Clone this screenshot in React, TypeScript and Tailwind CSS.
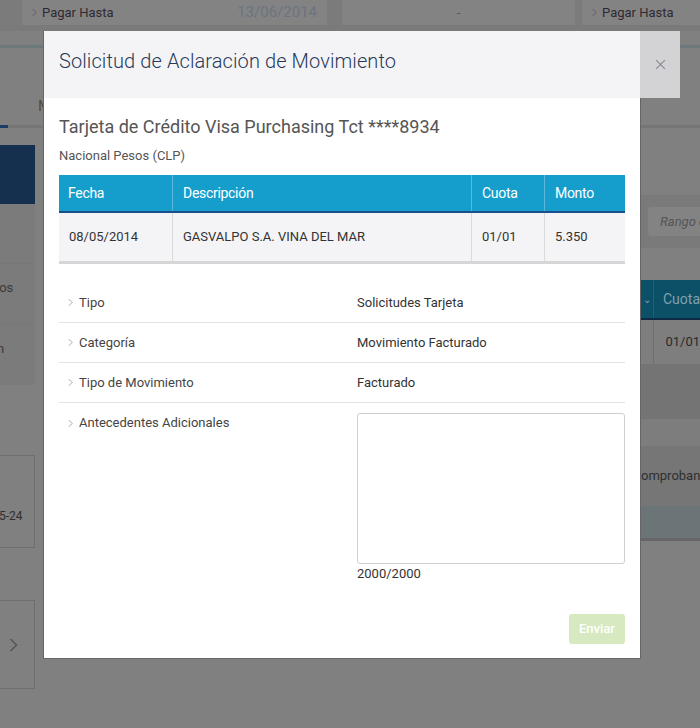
import React from "react";

const rows = [
  { label: "Tipo", value: "Solicitudes Tarjeta" },
  { label: "Categoría", value: "Movimiento Facturado" },
  { label: "Tipo de Movimiento", value: "Facturado" },
];

const Chevron = ({ className = "" }: { className?: string }) => (
  <svg viewBox="0 0 6 10" className={className} fill="none" stroke="currentColor" strokeWidth="1">
    <path d="M1 1l4 4-4 4" />
  </svg>
);

const BackgroundPage = () => (
  <div className="w-[700px] h-[728px] bg-[#808080] text-[13px]">
    {/* top summary cards */}
    <div className="flex h-[25px] bg-[#7b7b7b]">
      <div className="ml-[22px] w-[305px] bg-[#838383] flex items-center pl-[10px] pr-[10px]">
        <Chevron className="w-[5px] h-[9px] text-[#555] mr-[5px]" />
        <span className="text-[#2e2a33] text-[13px]">Pagar Hasta</span>
        <span className="ml-auto text-[#6b7480] text-[15px]">13/06/2014</span>
      </div>
      <div className="ml-[15px] w-[233px] bg-[#838383] flex items-center justify-center text-[#3d5c7c]">-</div>
      <div className="ml-[7px] flex-1 bg-[#838383] flex items-center pl-[10px]">
        <Chevron className="w-[5px] h-[9px] text-[#555] mr-[5px]" />
        <span className="text-[#2e2a33]">Pagar Hasta</span>
      </div>
    </div>
    <div className="h-[6px] bg-[#7a7a7a]" />
    <div className="h-[14px]" />
    <div className="h-[3px] bg-[#6d787d]" />
    {/* tabs */}
    <div className="h-[77px] flex items-end pl-[38px] pb-[8px] text-[#5a4a3c] text-[15px]">M</div>
    <div className="h-[3px] bg-[#767676] flex">
      <div className="w-[8px] bg-[#1c3c66]" />
    </div>
    <div className="flex">
      {/* left sidebar */}
      <div className="w-[35px] pt-[17px] shrink-0 overflow-hidden">
        <div className="h-[59px] bg-[#15304f]" />
        <div className="h-[60px] bg-[#7b7b7b] border-b border-[#777]" />
        <div className="h-[60px] bg-[#7b7b7b] border-b border-[#777] flex items-center pb-[11px] text-[#3a3a3a] text-[13px]">
          <span className="-ml-[5px]">tos</span>
        </div>
        <div className="h-[61px] bg-[#7b7b7b] flex items-center pb-[11px] text-[#3a3a3a] text-[13px]">
          <span className="-ml-[3px]">n</span>
        </div>
        <div className="mt-[70px] h-[93px] border border-l-0 border-[#6e6e6e] flex items-end pb-[22px] text-[#2f2f2f] text-[12px]">
          <span className="-ml-[1px]">5-24</span>
        </div>
        <div className="mt-[52px] h-[89px] border border-l-0 border-[#6e6e6e] flex items-center text-[#555]">
          <Chevron className="w-[9px] h-[20px] ml-[9px]" />
        </div>
      </div>
      <div className="flex-1" />
      {/* right content peeking out */}
      <div className="w-[59px] shrink-0">
        <div className="h-[67px]" />
        <div className="h-[53px] bg-[#7a7a7a] flex items-center pl-[7px]">
          <div className="h-[29px] w-full rounded-l-[3px] bg-[#838383] flex items-center pl-[12px] italic text-[#555] whitespace-nowrap overflow-hidden">Rango d</div>
        </div>
        <div className="h-[32px]" />
        <div className="h-[40px] bg-[#0c5068] border-b-2 border-[#0f2a44] flex items-center text-[#7fa0ae] whitespace-nowrap overflow-hidden">
          <div className="w-[18px] h-full border-r border-[#245f74] flex items-center justify-center text-[10px]">⌄</div>
          <span className="pl-[9px] text-[14px]">Cuota</span>
        </div>
        <div className="h-[44px] bg-[#7e7e7e] flex items-center">
          <div className="w-[18px] h-full border-r border-[#6e6e6e]" />
          <span className="pl-[11px] text-[#2a2a2a] whitespace-nowrap">01/01</span>
        </div>
        <div className="h-[55px] bg-[#747474]" />
        <div className="h-[27px] bg-[#7d7d7d]" />
        <div className="h-[60px] bg-[#767676] flex items-center text-[#2f2f2f] whitespace-nowrap overflow-hidden">omprobant</div>
        <div className="h-[35px] bg-[#6b7577] border-b-[3px] border-[#666]" />
      </div>
    </div>
  </div>
);

export default function App() {
  return (
    <div className="relative w-[700px] h-[728px] overflow-hidden font-['Roboto',_'Liberation_Sans',_sans-serif]">
      <BackgroundPage />

      {/* modal */}
      <div className="absolute left-[43px] top-[31px] flex items-start">
        <div className="w-[598px] bg-white border-r border-b border-l border-[#666]">
          <div className="h-[67px] bg-[#f4f4f6] flex items-center pl-[15px] pb-[7px]">
            <h2 className="text-[20px] font-light text-[#283a5a] tracking-[0.1px]">
              Solicitud de Aclaración de Movimiento
            </h2>
          </div>
          <div className="px-[15px] pt-[18px] pb-[14px]">
            <h3 className="text-[18px] leading-[22px] text-[#555]">
              Tarjeta de Crédito Visa Purchasing Tct ****8934
            </h3>
            <p className="mt-[10px] text-[13px] leading-[16px] text-[#555]">Nacional Pesos (CLP)</p>

            <div className="mt-[11px] w-[566px]">
              <div className="flex h-[38px] bg-[#159ecc] text-white text-[14px] tracking-[-0.3px] border-b-2 border-[#1d4e8c]">
                <div className="w-[114px] pl-[9px] flex items-center border-r border-[#5bb8dc]">Fecha</div>
                <div className="w-[299px] pl-[10px] flex items-center border-r border-[#5bb8dc]">Descripción</div>
                <div className="w-[73px] pl-[10px] flex items-center border-r border-[#5bb8dc]">Cuota</div>
                <div className="flex-1 pl-[10px] flex items-center">Monto</div>
              </div>
              <div className="flex h-[51px] bg-[#f4f4f6] text-[13px] text-[#333] border-b-[3px] border-[#d6d6d6]">
                <div className="w-[114px] pl-[10px] flex items-center border-r border-[#d9d9d9]">08/05/2014</div>
                <div className="w-[299px] pl-[10px] flex items-center border-r border-[#d9d9d9]">GASVALPO S.A. VINA DEL MAR</div>
                <div className="w-[73px] pl-[10px] flex items-center border-r border-[#d9d9d9]">01/01</div>
                <div className="flex-1 pl-[10px] flex items-center">5.350</div>
              </div>
            </div>

            <div className="mt-[19px] text-[13px] text-[#444]">
              {rows.map((r) => (
                <div key={r.label} className="h-[40px] flex items-center border-b border-[#e3e3e3]">
                  <div className="w-[298px] flex items-center pl-[9px]">
                    <Chevron className="w-[5px] h-[9px] text-[#999] mr-[6px]" />
                    <span>{r.label}</span>
                  </div>
                  <span className="text-[#333]">{r.value}</span>
                </div>
              ))}
              <div className="flex pt-[10px]">
                <div className="w-[298px] flex items-center pl-[9px] h-[20px]">
                  <Chevron className="w-[5px] h-[9px] text-[#999] mr-[6px]" />
                  <span>Antecedentes Adicionales</span>
                </div>
                <div className="flex-1">
                  <textarea
                    className="block w-[268px] h-[151px] border border-[#cfcfcf] rounded-[3px] resize-none outline-none"
                    defaultValue=""
                  />
                  <div className="mt-[2px] text-[13px] leading-[16px] text-[#333]">2000/2000</div>
                </div>
              </div>
            </div>

            <div className="mt-[32px] flex justify-end">
              <button className="w-[56px] h-[30px] rounded-[3px] bg-[#d7e9c1] text-white text-[13px] font-medium">
                Enviar
              </button>
            </div>
          </div>
        </div>
        <button className="w-[40px] h-[67px] bg-[#d3d3d5] flex items-center justify-center text-[#858c98] -ml-px">
          <svg viewBox="0 0 10 10" className="w-[11px] h-[11px]" stroke="currentColor" strokeWidth="1.1">
            <path d="M1 1l8 8M9 1l-8 8" />
          </svg>
        </button>
      </div>
    </div>
  );
}
